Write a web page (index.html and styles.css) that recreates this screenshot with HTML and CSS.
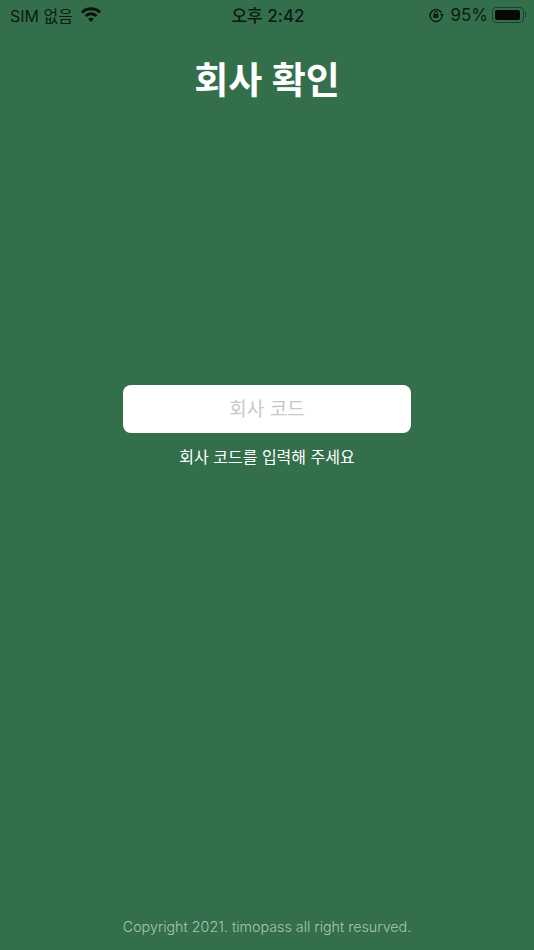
FILE: index.html
```html
<!DOCTYPE html>
<html lang="ko">

<head>
  <meta charset="UTF-8" />
  <meta name="viewport" content="width=device-width, initial-scale=1.0" />
  <title>회사 확인</title>
  <link rel="stylesheet" href="styles.css">
</head>

<body>

  <div class="status-bar">
    <div class="status-left">
      <span>SIM 없음</span>
      <svg class="wifi" viewBox="0 0 22 16" width="22" height="16">
        <path d="M2 5.500C4.300 3.200 7.500 1.800 11 1.800s6.700 1.400 9 3.700" />
        <path d="M5.600 9C7 7.600 8.900 6.800 11 6.800s4 .8 5.400 2.200" />
        <path class="wifi-dot" d="M11 10.800c-1.100 0-2.100.4-2.800 1L11 15l2.800-3.200c-.7-.6-1.700-1-2.800-1z" />
      </svg>
    </div>
    <div class="status-time">오후 2:42</div>
    <div class="status-right">
      <svg class="lock" viewBox="0 0 16 16" width="16" height="16">
        <path d="M13.600 6.200A6 6 0 1 0 14 9.500" fill="none" stroke="#0d1a12" stroke-width="1.500" />
        <path d="M12 7h4l-2 2.700z" fill="#0d1a12" />
        <rect x="5.300" y="7" width="5" height="4" rx=".6" fill="#0d1a12" />
        <path d="M6.300 7V5.900a1.500 1.500 0 0 1 3 0V7" fill="none" stroke="#0d1a12" stroke-width="1" />
      </svg>
      <span class="percent">95%</span>
      <div class="battery">
        <div class="battery-level"></div>
      </div>
      <div class="battery-tip"></div>
    </div>
  </div>

  <h1 class="title">회사 확인</h1>

  <main class="form">
    <input class="code-input" type="text" placeholder="회사 코드" />
    <p class="hint">회사 코드를 입력해 주세요</p>
  </main>

  <footer class="footer">Copyright 2021. timopass all right resurved.</footer>

</body>

</html>
```

FILE: styles.css
```css
html,
body {
  height: 100%;
}

body {
  font-family: "Inter", "Noto Sans CJK KR", sans-serif;
  margin: 0;
  height: 950px;
  overflow: hidden;
  background: #346f4c;
  color: white;
  display: flex;
  flex-direction: column;
}

.status-bar {
  height: 29px;
  padding: 0 8px 0 10px;
  display: grid;
  grid-template-columns: 1fr auto 1fr;
  align-items: center;
  color: #0d1a12;
  font-size: 16px;
}

.status-left {
  display: flex;
  align-items: center;
  gap: 7px;
}

.wifi {
  fill: none;
  stroke: #0a120d;
  stroke-width: 3;
}

.wifi-dot {
  fill: #0a120d;
  stroke: none;
}

.status-time {
  font-size: 17px;
  font-weight: 500;
}

.status-right {
  display: flex;
  align-items: center;
  justify-content: flex-end;
}

.percent {
  font-size: 17px;
  margin: 0 4px 0 6px;
}

.battery {
  box-sizing: border-box;
  width: 32px;
  height: 16px;
  padding: 2px;
  border: 1px solid #1d4029;
  border-radius: 4px;
}

.battery-level {
  width: 95%;
  height: 100%;
  background: #050a07;
  border-radius: 2px;
}

.battery-tip {
  width: 1px;
  height: 5px;
  background: #1d4029;
  margin-left: 1px;
}

.title {
  margin: 27px 0 0;
  font-size: 37px;
  line-height: 50px;
  font-weight: 600;
  text-align: center;
}

.form {
  margin-top: 279px;
  display: flex;
  flex-direction: column;
  align-items: center;
}

.code-input {
  box-sizing: border-box;
  width: 288px;
  height: 48px;
  padding: 0 12px;
  border: none;
  border-radius: 8px;
  background: white;
  font-family: inherit;
  font-size: 19px;
  text-align: center;
}

.code-input::placeholder {
  color: #c8c8c8;
  opacity: 1;
}

.hint {
  margin: 12px 0 0;
  font-size: 16px;
  line-height: 24px;
  text-align: center;
}

.footer {
  margin-top: auto;
  padding-bottom: 12px;
  font-size: 14.300px;
  line-height: 22px;
  font-weight: 300;
  text-align: center;
  color: #a6c6b2;
}
```
